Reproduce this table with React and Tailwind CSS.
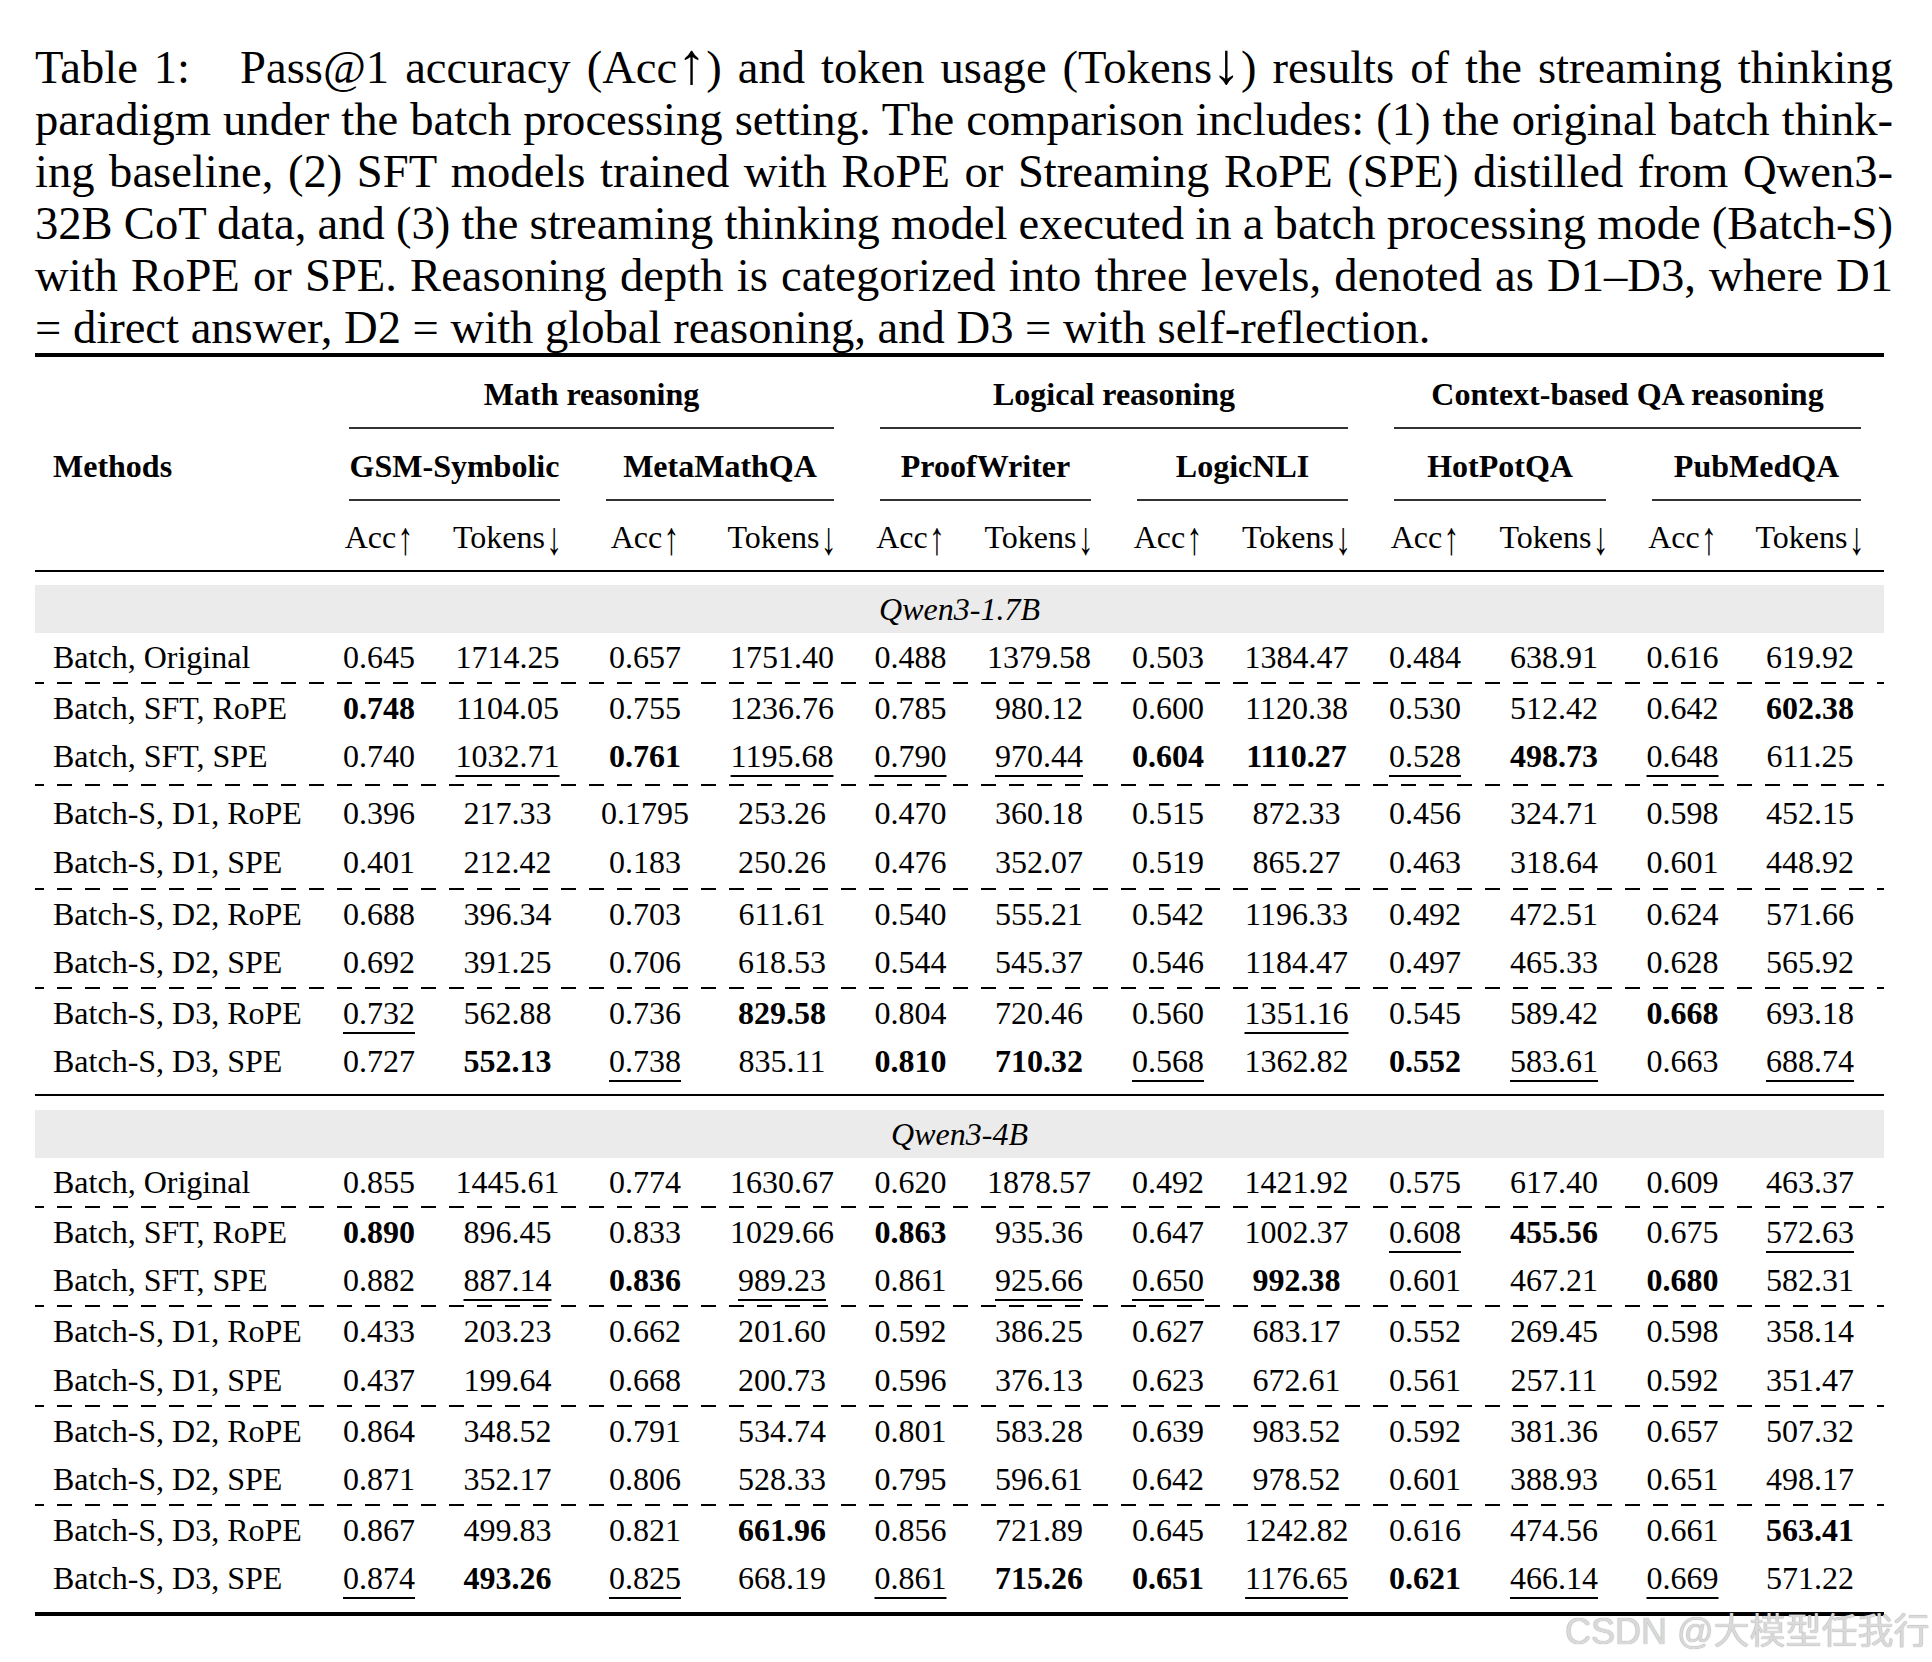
import React from "react";

const COLS =
  "grid grid-cols-[291px_106px_151px_124px_150px_107px_150px_108px_149px_108px_150px_107px_148px]";

const block1 = [
  ["Batch, Original", "0.645", "1714.25", "0.657", "1751.40", "0.488", "1379.58", "0.503", "1384.47", "0.484", "638.91", "0.616", "619.92"],
  ["Batch, SFT, RoPE", "*0.748", "1104.05", "0.755", "1236.76", "0.785", "980.12", "0.600", "1120.38", "0.530", "512.42", "0.642", "*602.38"],
  ["Batch, SFT, SPE", "0.740", "_1032.71", "*0.761", "_1195.68", "_0.790", "_970.44", "*0.604", "*1110.27", "_0.528", "*498.73", "_0.648", "611.25"],
  ["Batch-S, D1, RoPE", "0.396", "217.33", "0.1795", "253.26", "0.470", "360.18", "0.515", "872.33", "0.456", "324.71", "0.598", "452.15"],
  ["Batch-S, D1, SPE", "0.401", "212.42", "0.183", "250.26", "0.476", "352.07", "0.519", "865.27", "0.463", "318.64", "0.601", "448.92"],
  ["Batch-S, D2, RoPE", "0.688", "396.34", "0.703", "611.61", "0.540", "555.21", "0.542", "1196.33", "0.492", "472.51", "0.624", "571.66"],
  ["Batch-S, D2, SPE", "0.692", "391.25", "0.706", "618.53", "0.544", "545.37", "0.546", "1184.47", "0.497", "465.33", "0.628", "565.92"],
  ["Batch-S, D3, RoPE", "_0.732", "562.88", "0.736", "*829.58", "0.804", "720.46", "0.560", "_1351.16", "0.545", "589.42", "*0.668", "693.18"],
  ["Batch-S, D3, SPE", "0.727", "*552.13", "_0.738", "835.11", "*0.810", "*710.32", "_0.568", "1362.82", "*0.552", "_583.61", "0.663", "_688.74"],
];

const block2 = [
  ["Batch, Original", "0.855", "1445.61", "0.774", "1630.67", "0.620", "1878.57", "0.492", "1421.92", "0.575", "617.40", "0.609", "463.37"],
  ["Batch, SFT, RoPE", "*0.890", "896.45", "0.833", "1029.66", "*0.863", "935.36", "0.647", "1002.37", "_0.608", "*455.56", "0.675", "_572.63"],
  ["Batch, SFT, SPE", "0.882", "_887.14", "*0.836", "_989.23", "0.861", "_925.66", "_0.650", "*992.38", "0.601", "467.21", "*0.680", "582.31"],
  ["Batch-S, D1, RoPE", "0.433", "203.23", "0.662", "201.60", "0.592", "386.25", "0.627", "683.17", "0.552", "269.45", "0.598", "358.14"],
  ["Batch-S, D1, SPE", "0.437", "199.64", "0.668", "200.73", "0.596", "376.13", "0.623", "672.61", "0.561", "257.11", "0.592", "351.47"],
  ["Batch-S, D2, RoPE", "0.864", "348.52", "0.791", "534.74", "0.801", "583.28", "0.639", "983.52", "0.592", "381.36", "0.657", "507.32"],
  ["Batch-S, D2, SPE", "0.871", "352.17", "0.806", "528.33", "0.795", "596.61", "0.642", "978.52", "0.601", "388.93", "0.651", "498.17"],
  ["Batch-S, D3, RoPE", "0.867", "499.83", "0.821", "*661.96", "0.856", "721.89", "0.645", "1242.82", "0.616", "474.56", "0.661", "*563.41"],
  ["Batch-S, D3, SPE", "_0.874", "*493.26", "_0.825", "668.19", "_0.861", "*715.26", "*0.651", "_1176.65", "*0.621", "_466.14", "_0.669", "571.22"],
];

function Up() {
  return (
    <span className="inline-block ml-[1px] leading-[28px] scale-y-[1.45] translate-y-[1px]">↑</span>
  );
}
function Down() {
  return (
    <span className="inline-block ml-[1px] leading-[28px] scale-y-[1.45] translate-y-[1px]">↓</span>
  );
}

function Val({ v }) {
  if (v.startsWith("*")) return <span className="font-bold">{v.slice(1)}</span>;
  if (v.startsWith("_"))
    return (
      <span className="underline decoration-[2px] underline-offset-[8px]">{v.slice(1)}</span>
    );
  return <span>{v}</span>;
}

function Row({ cells, h }) {
  return (
    <div className={`${COLS} ${h} leading-[48px]`}>
      <div className="pl-[18px] whitespace-nowrap">{cells[0]}</div>
      {cells.slice(1).map((c, i) => (
        <div key={i} className="text-center whitespace-nowrap">
          <Val v={c} />
        </div>
      ))}
    </div>
  );
}

function Dash({ wrap }) {
  return (
    <div className={`flex ${wrap}`}>
      <div className="h-[2px] w-full bg-[linear-gradient(90deg,#000_15px,transparent_15px)] bg-[length:28px_2px] bg-[position:-6px_0] bg-repeat-x" />
    </div>
  );
}

function Band({ label, cls }) {
  return <div className={`bg-[#ebebeb] text-center italic ${cls}`}>{label}</div>;
}

function Block({ rows, heights, seps }) {
  const out = [];
  rows.forEach((r, i) => {
    out.push(<Row key={"r" + i} cells={r} h={heights[i]} />);
    if (seps[i]) out.push(<Dash key={"d" + i} wrap={seps[i]} />);
  });
  return <>{out}</>;
}

function Cmid({ spans }) {
  return (
    <div className={`${COLS} h-[2px]`}>
      <div />
      {spans.map((s, i) => (
        <div key={i} className={`${s} px-[23px]`}>
          <div className="h-[2px] bg-[#333]" />
        </div>
      ))}
    </div>
  );
}

export default function App() {
  const capLine = "text-justify [text-align-last:justify] [word-spacing:-4px]";
  return (
    <div className="relative w-[1932px] h-[1662px] bg-white text-black overflow-hidden font-['Liberation_Serif','Times_New_Roman',serif]">
      <div className="pl-[35px]">
        {/* Caption */}
        <div className="w-[1858px] pt-[41px] text-[46.6px] leading-[52px]">
          <div className={capLine}>
            Table 1:<span className="inline-block w-[50px]" />Pass@1 accuracy (Acc
            <span className="text-[58px] leading-[0]">↑</span>) and token usage (Tokens
            <span className="text-[58px] leading-[0]">↓</span>) results of the streaming thinking
          </div>
          <div className={capLine}>
            paradigm under the batch processing setting. The comparison includes: (1) the original batch think-
          </div>
          <div className={capLine}>
            ing baseline, (2) SFT models trained with RoPE or Streaming RoPE (SPE) distilled from Qwen3-
          </div>
          <div className={capLine}>
            32B CoT data, and (3) the streaming thinking model executed in a batch processing mode (Batch-S)
          </div>
          <div className={capLine}>
            with RoPE or SPE. Reasoning depth is categorized into three levels, denoted as D1–D3, where D1
          </div>
          <div>= direct answer, D2 = with global reasoning, and D3 = with self-reflection.</div>
        </div>

        {/* Table */}
        <div className="w-[1849px] text-[32px]">
          <div className="h-[4px] bg-black" />

          <div className={`${COLS} mt-[11px] h-[48px] pt-[2px] leading-[48px] font-bold`}>
            <div />
            <div className="col-span-4 text-center">Math reasoning</div>
            <div className="col-span-4 text-center">Logical reasoning</div>
            <div className="col-span-4 text-center">Context-based QA reasoning</div>
          </div>
          <div className="mt-[11px]">
            <Cmid spans={["col-span-4", "col-span-4", "col-span-4"]} />
          </div>

          <div className={`${COLS} mt-[11px] h-[48px] pt-[2px] leading-[48px] font-bold`}>
            <div className="pl-[18px]">Methods</div>
            <div className="col-span-2 text-center">GSM-Symbolic</div>
            <div className="col-span-2 text-center">MetaMathQA</div>
            <div className="col-span-2 text-center">ProofWriter</div>
            <div className="col-span-2 text-center">LogicNLI</div>
            <div className="col-span-2 text-center">HotPotQA</div>
            <div className="col-span-2 text-center">PubMedQA</div>
          </div>
          <div className="mt-[11px]">
            <Cmid
              spans={["col-span-2", "col-span-2", "col-span-2", "col-span-2", "col-span-2", "col-span-2"]}
            />
          </div>

          <div className={`${COLS} mt-[10px] h-[48px] pt-[2px] leading-[48px]`}>
            <div />
            {[0, 1, 2, 3, 4, 5].map((i) => (
              <React.Fragment key={i}>
                <div className="text-center">
                  Acc<Up />
                </div>
                <div className="text-center">
                  Tokens<Down />
                </div>
              </React.Fragment>
            ))}
          </div>

          <div className="mt-[11px] h-[2px] bg-black" />

          <Band label="Qwen3-1.7B" cls="mt-[13px] h-[48px] leading-[48px]" />
          <Block
            rows={block1}
            heights={["h-[49px]", "h-[48px]", "h-[48px]", "h-[49px]", "h-[48px]", "h-[48px]", "h-[49px]", "h-[48px]", "h-[48px]"]}
            seps={["h-[2px] items-end", null, "h-[9px] items-center", null, "h-[4px] items-end", null, "h-[2px] items-end", null, null]}
          />
          <div className="mt-[9px] h-[2px] bg-black" />

          <Band label="Qwen3-4B" cls="mt-[14px] h-[48px] leading-[48px]" />
          <Block
            rows={block2}
            heights={["h-[48px]", "h-[48px]", "h-[48px]", "h-[49px]", "h-[48px]", "h-[48px]", "h-[48px]", "h-[48px]", "h-[48px]"]}
            seps={["h-[2px] items-end", null, "h-[3px] items-end", null, "h-[3px] items-end", null, "h-[3px] items-end", null, null]}
          />
          <div className="mt-[10px] h-[4px] bg-black" />
        </div>
      </div>

      {/* Watermark */}
      <div className="absolute left-[1565px] top-[1614px] whitespace-nowrap text-[36px] leading-[36px] text-[#dadada] [text-shadow:0_0_1px_#8a8a8a] font-['Liberation_Sans','Noto_Sans_CJK_SC',sans-serif]">
        CSDN @大模型任我行
      </div>
    </div>
  );
}
